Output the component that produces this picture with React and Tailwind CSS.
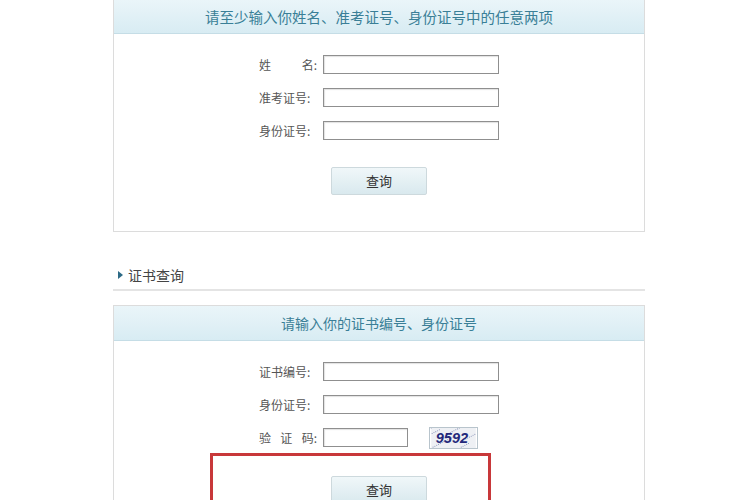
import React from 'react';

const font = { fontFamily: '"Microsoft YaHei", "Noto Sans CJK SC", "Noto Sans", sans-serif' };

function Label({ chars }) {
  return (
    <span className="w-[58px] mr-[6px] flex justify-between text-[12px] text-[#555]">
      {chars.map((c, i) => (
        <span key={i}>{c}</span>
      ))}
    </span>
  );
}

function Field({ chars }) {
  return (
    <div className="flex items-center h-[19px]">
      <Label chars={chars} />
      <input className="w-[176px] h-[19px] border border-[#8f8f8f] bg-white outline-none shadow-[inset_1px_1px_1px_rgba(0,0,0,0.12)]" />
    </div>
  );
}

function QueryButton() {
  return (
    <button className="w-[96px] h-[28px] border border-[#cdd9dd] bg-gradient-to-b from-[#f0f7f9] to-[#d9e9ee] text-[13px] text-[#333] rounded-[2px]">
      查询
    </button>
  );
}

function Captcha() {
  return (
    <svg width="49" height="22" viewBox="0 0 49 22" className="border border-[#b8c4cc]">
      <rect width="49" height="22" fill="#eef0f4" />
      {[...Array(40)].map((_, i) => (
        <circle key={i} cx={(i * 17) % 49} cy={(i * 7) % 22} r="0.6" fill="#8a93b8" />
      ))}
      <text x="5" y="17" fontSize="16" fontWeight="bold" fontStyle="italic" fill="#23287a" fontFamily="Liberation Sans, sans-serif">9592</text>
    </svg>
  );
}

export default function App() {
  return (
    <div className="w-[753px] h-[500px] bg-white overflow-hidden relative" style={font}>
      <div className="ml-[113px] w-[532px]">
        {/* 准考证查询 */}
        <div className="border border-t-0 border-[#dcdcdc] h-[232px]">
          <div className="h-[34px] bg-gradient-to-b from-[#eaf5f9] to-[#d8ecf3] border-b border-[#c5dde6] flex items-center justify-center text-[14.5px] text-[#3a7f97]">
            请至少输入你姓名、准考证号、身份证号中的任意两项
          </div>
          <div className="flex flex-col items-center pt-[21px]">
            <div className="flex flex-col gap-[14px] w-[240px]">
              <Field chars={['姓', '名:']} />
              <Field chars={['准考证号:']} />
              <Field chars={['身份证号:']} />
            </div>
            <div className="mt-[27px]">
              <QueryButton />
            </div>
          </div>
        </div>

        {/* 证书查询 */}
        <div className="mt-[35px] pl-[5px] flex items-center h-[16px] text-[14px] text-[#444]">
          <span className="w-0 h-0 border-y-[4px] border-y-transparent border-l-[5px] border-l-[#2d6a86] mr-[5px]"></span>
          证书查询
        </div>
        <div className="mt-[6px] h-[2px] bg-[#e4e4e4]"></div>

        <div className="mt-[14px] border border-[#dcdcdc] h-[220px]">
          <div className="h-[35px] bg-gradient-to-b from-[#eaf5f9] to-[#d8ecf3] border-b border-[#c5dde6] flex items-center justify-center text-[14px] text-[#3a7f97]">
            请输入你的证书编号、身份证号
          </div>
          <div className="flex flex-col items-center pt-[21px]">
            <div className="flex flex-col gap-[14px] w-[240px]">
              <Field chars={['证书编号:']} />
              <Field chars={['身份证号:']} />
              <div className="flex items-center h-[19px]">
                <Label chars={['验', '证', '码:']} />
                <input className="w-[85px] h-[19px] border border-[#8f8f8f] bg-white outline-none shadow-[inset_1px_1px_1px_rgba(0,0,0,0.12)]" />
                <div className="ml-[21px]">
                  <Captcha />
                </div>
              </div>
            </div>
            <div className="mt-[29px]">
              <QueryButton />
            </div>
          </div>
        </div>
      </div>

      {/* red highlight annotation */}
      <div className="absolute left-[210px] top-[453px] w-[281px] h-[60px] border-[3px] border-[#c8383a] pointer-events-none"></div>
    </div>
  );
}
